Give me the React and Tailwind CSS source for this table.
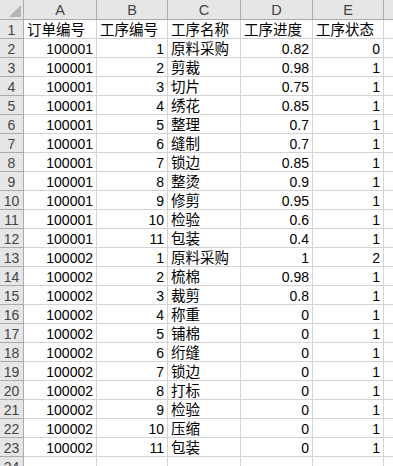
const cols = ["A", "B", "C", "D", "E"];
const widths = ["w-[73px]", "w-[71px]", "w-[73px]", "w-[72px]", "w-[71px]"];

const rows = [
  ["订单编号", "工序编号", "工序名称", "工序进度", "工序状态"],
  [100001, 1, "原料采购", 0.82, 0],
  [100001, 2, "剪裁", 0.98, 1],
  [100001, 3, "切片", 0.75, 1],
  [100001, 4, "绣花", 0.85, 1],
  [100001, 5, "整理", 0.7, 1],
  [100001, 6, "缝制", 0.7, 1],
  [100001, 7, "锁边", 0.85, 1],
  [100001, 8, "整烫", 0.9, 1],
  [100001, 9, "修剪", 0.95, 1],
  [100001, 10, "检验", 0.6, 1],
  [100001, 11, "包装", 0.4, 1],
  [100002, 1, "原料采购", 1, 2],
  [100002, 2, "梳棉", 0.98, 1],
  [100002, 3, "裁剪", 0.8, 1],
  [100002, 4, "称重", 0, 1],
  [100002, 5, "铺棉", 0, 1],
  [100002, 6, "绗缝", 0, 1],
  [100002, 7, "锁边", 0, 1],
  [100002, 8, "打标", 0, 1],
  [100002, 9, "检验", 0, 1],
  [100002, 10, "压缩", 0, 1],
  [100002, 11, "包装", 0, 1],
  ["", "", "", "", ""],
];

function App() {
  return (
    <div className="w-[393px] h-[466px] overflow-hidden bg-white text-[14px] text-black font-['Liberation_Sans','Noto_Sans_CJK_SC',sans-serif]">
      {/* COLUMN HEADERS */}
      <div className="flex h-[20px] bg-[#e6e6e6] border-b border-[#ababab] box-border">
        <div className="w-[24px] shrink-0 border-r border-[#ababab] relative">
          <svg className="absolute left-[9px] top-[5px]" width="12" height="12" viewBox="0 0 12 12">
            <polygon points="12,0 12,12 0,12" fill="#b4b4b4" />
          </svg>
        </div>
        {cols.map((c, i) => (
          <div
            key={c}
            className={`${widths[i]} shrink-0 border-r border-[#ababab] text-center leading-[20px] text-[14.5px] text-[#444]`}
          >
            {c}
          </div>
        ))}
        <div className="flex-1" />
      </div>

      {/* ROWS */}
      {rows.map((row, r) => (
        <div key={r} className="flex h-[19px] border-b border-[#d4d4d4]">
          <div className="w-[24px] shrink-0 bg-[#e6e6e6] border-r border-[#ababab] text-center leading-[20px] text-[#444] -mb-px border-b border-b-[#ababab]">
            {r + 1}
          </div>
          {row.map((v, i) => (
            <div
              key={i}
              className={`${widths[i]} shrink-0 border-r border-[#d4d4d4] leading-[20px] whitespace-nowrap overflow-hidden ${
                typeof v === "number" ? "text-right pr-[3px]" : "text-left pl-[3px] text-[14.5px]"
              }`}
            >
              {v}
            </div>
          ))}
          <div className="flex-1" />
        </div>
      ))}
    </div>
  );
}

export default App;
